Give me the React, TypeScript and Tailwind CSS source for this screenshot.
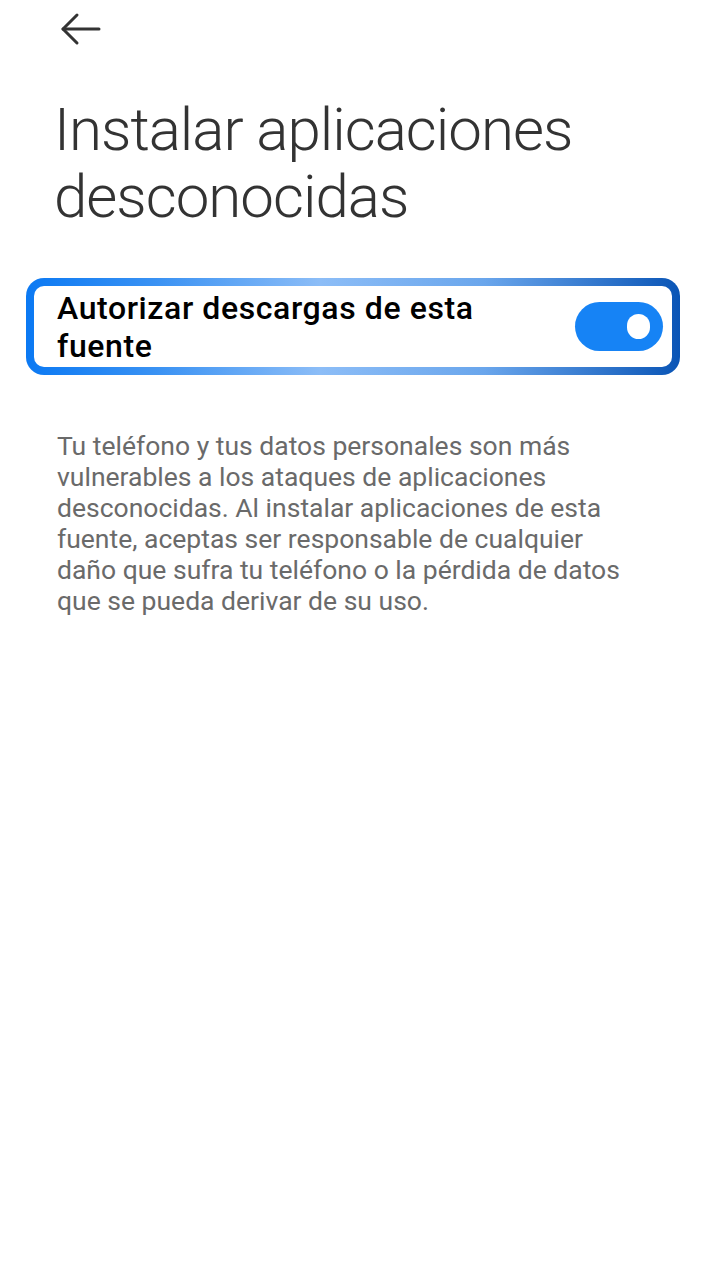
export default function App() {
  return (
    <div className="min-h-[1280px] w-full bg-white" style={{ fontFamily: "Roboto, 'Noto Sans', sans-serif" }}>
      <div className="h-[58px] pl-[60px] pt-[12px]">
        <svg width="42" height="34" viewBox="0 0 42 34" fill="none" stroke="#333333" strokeWidth="3" strokeLinecap="round" strokeLinejoin="round">
          <path d="M3 17H39" />
          <path d="M17 3L3 17L17 31" />
        </svg>
      </div>

      <h1 className="mt-[38px] px-[54px] text-[60px] font-light leading-[67px] tracking-[-1px] text-[#333333]">
        Instalar aplicaciones desconocidas
      </h1>

      <div
        className="ml-[26px] mr-[40px] mt-[48px] rounded-[18px] p-[8px]"
        style={{ background: "linear-gradient(90deg, #0b79f3 0%, #3a92f3 20%, #8cbdf7 45%, #6aa6ec 70%, #0a55b6 100%)" }}
      >
        <div className="flex h-[81px] items-center justify-between rounded-[10px] bg-white pl-[23px] pr-[9px]">
          <span className="w-[450px] text-[32px] font-medium leading-[38px] tracking-[0.6px] text-black">
            Autorizar descargas de esta fuente
          </span>
          <div className="flex h-[49px] w-[88px] shrink-0 items-center justify-end rounded-full bg-[#1683f5] pr-[13px]">
            <div className="h-[25px] w-[23px] rounded-full bg-white" />
          </div>
        </div>
      </div>

      <p className="mt-[55px] w-[635px] pl-[57px] text-[26.5px] leading-[31px] text-[#6a6a6a]">
        Tu teléfono y tus datos personales son más vulnerables a los ataques de aplicaciones desconocidas. Al instalar
        aplicaciones de esta fuente, aceptas ser responsable de cualquier daño que sufra tu teléfono o la pérdida de
        datos que se pueda derivar de su uso.
      </p>
    </div>
  );
}
